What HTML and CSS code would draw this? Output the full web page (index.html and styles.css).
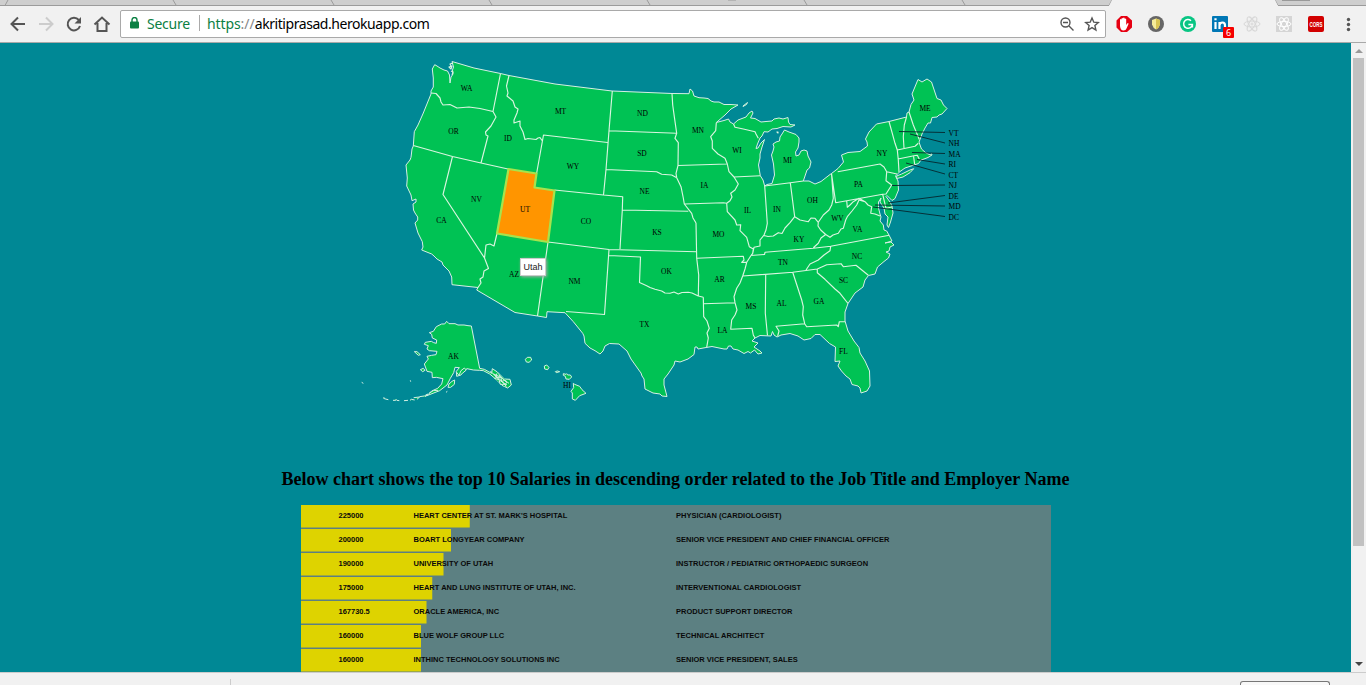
FILE: index.html
```html
<!DOCTYPE html>
<html lang="en">
<head>
<meta charset="utf-8">
<title>Salaries by state</title>
<link rel="stylesheet" href="styles.css">
</head>
<body>
<div class="browser">
  <svg class="tabs" width="1366" height="6" viewBox="0 0 1366 6">
    <rect class="tab-bg" width="1366" height="5"/>
    <path class="tab-line" d="M0 5.5H1109L1112 0M1275 0l3 5.500H1366M8 0L5 5.500M173 0l3 5M331 0l3 5M489 0l3 5M647 0l3 5M804 0l3 5M962 0l3 5"/>
    <path class="tab-active" d="M1109 6l3-6h163l3 6z"/>
    <path class="tab-button" d="M1282 0h28"/>
    <path class="tab-mark" d="M728 0h8"/>
  </svg>
  <div class="toolbar">
    <svg class="nav" width="120" height="36" viewBox="0 6 120 36">
      <path class="ic" d="M25 24H12M18 17.500L11.500 24L18 30.500"/>
      <path class="ic off" d="M39 24H52M46 17.500L52.500 24L46 30.500"/>
      <path class="ic" d="M78.800 20A6.300 6.300 0 1 0 80 26"/><path class="ic-fill" d="M81 17v6.500h-6.500z"/>
      <path class="ic" d="M94.500 24.500L102 17.500L109.500 24.500M97.500 23v8h9v-8"/>
    </svg>
    <div class="address">
      <svg class="lock" width="9" height="12" viewBox="0 0 9 12"><path d="M2 5V3a2.500 2.500 0 0 1 5 0v2" fill="none" stroke="#0b8043" stroke-width="1.400"/><rect y="4.500" width="9" height="7" rx="1" fill="#0b8043"/></svg>
      <span class="secure">Secure</span><span class="sep"></span>
      <span class="url"><span class="scheme">https</span><span class="slashes">://</span>akritiprasad.herokuapp.com</span>
      <svg class="addr-icons" width="46" height="20" viewBox="1056 14 46 20">
        <circle cx="1065.500" cy="22.500" r="4.500" class="thin"/><path class="thin" d="M1063 22.500h5M1069 26l4.500 4.500"/>
        <path class="thin" d="M1092 18l1.800 4.200 4.500.4-3.400 3 1 4.400-3.900-2.400-3.900 2.400 1-4.400-3.400-3 4.500-.4z"/>
      </svg>
    </div>
    <svg class="exts" width="260" height="36" viewBox="1106 6 260 36">
      <path fill="#e60012" d="M1121 16h6l5 4.500v7l-5 4.500h-6l-4.500-4.500v-7z"/>
      <path fill="#fff" d="M1120 26v-6.500q.8-1 1.500 0V23v-4.500q.8-1 1.600 0V23v-5q.8-1 1.600 0v5v-4q.8-1 1.500 0v6l1.500-2q1 0 .8 1l-2 4.500q-.5 2-3 2-3 0-3.500-4.500z"/>
      <circle cx="1156" cy="24" r="8" fill="#666"/><path fill="#f5ec9a" d="M1152 20l4-1.500 4 1.500v4.500q-1 3.500-4 5-3-1.500-4-5z"/><path fill="#d9c553" d="M1156 18.500l4 1.500v4.500q-1 3.500-4 5z"/>
      <circle cx="1188" cy="24" r="8" fill="#08c583"/><path d="M1191 20.700a4.400 4.400 0 1 0 1.400 3.800h-4M1192.400 24.500v3" fill="none" stroke="#fff" stroke-width="1.500"/>
      <rect x="1212" y="16" width="16" height="16" rx="1" fill="#0077b5"/>
      <path d="M1215.500 22v7M1215.500 18.200v2M1219.500 22v7M1219.500 25q.5-2.500 3-2.500 2.500 0 2.500 3v3.500" fill="none" stroke="#fff" stroke-width="2.200"/>
      <rect x="1223" y="27" width="11" height="11" rx="1" fill="#f50000"/><text x="1228.500" y="36" class="badge">6</text>
      <g class="atom"><ellipse cx="1252" cy="24" rx="8" ry="3"/><ellipse cx="1252" cy="24" rx="8" ry="3" transform="rotate(60 1252 24)"/><ellipse cx="1252" cy="24" rx="8" ry="3" transform="rotate(120 1252 24)"/><circle cx="1252" cy="24" r="1"/></g>
      <rect x="1276" y="16" width="16" height="16" fill="#d5d5d5"/>
      <g class="atom light"><ellipse cx="1284" cy="24" rx="7" ry="2.600"/><ellipse cx="1284" cy="24" rx="7" ry="2.600" transform="rotate(60 1284 24)"/><ellipse cx="1284" cy="24" rx="7" ry="2.600" transform="rotate(120 1284 24)"/></g>
      <rect x="1308" y="16" width="16" height="16" rx="2" fill="#d20000"/><text x="1316" y="26.500" class="cors" textLength="13" lengthAdjust="spacingAndGlyphs">CORS</text>
      <g fill="#555"><circle cx="1348.500" cy="19.500" r="1.700"/><circle cx="1348.500" cy="24.500" r="1.700"/><circle cx="1348.500" cy="29.500" r="1.700"/></g>
    </svg>
  </div>
</div>

<div class="viewport">
  <main class="page">
    <div class="map-wrap">
    <svg class="map" width="1351" height="400" viewBox="0 43 1351 400">
      <path class="state" d="M434.700 64.700L437 66 440 68 444 70 447.500 71 449.500 75 450 83 451 77 453 74 452.500 70 453.500 67 452 61.500 474 68 500.500 73.500 509 75.500 555 84 612 91 672 93.500 689 93.700 690 89 692.500 91 694 96 699 97.700 704 98 708 98.500 711 101 714 102 719 102 724 104.500 731 104.500 738 105 731 109 725 115 716.300 122.500 724 120.500 728.500 119 730 122 733.500 124 738 120 746 117 749 113 752 111 753 113 750.500 118 755 118.500 761 122 766 121.500 772 121 774 119 779 118 783 119 788 117.500 788.500 122 790 124.500 795 125 791 127 783 126.500 777 128.500 772 129 768 132 764 131.700 762 136 760 138 757.500 144 756 148.500 758 148 761 143 764.500 139.500 762 147 760 154 760 158 758.500 165 760.300 175.700 763 180 764.700 186 767 184.500 772 183.500 774.500 175 773.500 164 771.500 155 773 151 774 147 773 144 776 142 779.500 141 780 137 782 134 784.500 130 789 132 796 134.500 799 138 799 142 798 148 795.500 152 796 156 799 155 801 151 804 150 807 151 808 156 811 162 809.500 168 807 170 805 176 803.300 181 809 181 815 184 821 181.500 830 174.500 831.500 173.500 838 168.500 843.500 162 841.500 155 848 152.500 860 151.500 867.500 146 867 142 865.500 139 869 132 876.500 124 889 121.500 906.500 117 907 113 909 112 911 104.500 914 100 912 94 918 79.500 922 82 927 79 931.500 82 937 98.500 941 100 943.500 105 947 108.500 942 114 939 115 937 117 932 117.500 930.500 123 928 123 925 128 922 134 920 139.500 919 142 920 145 921.500 149 926 153 930.500 155 931.500 153.500 932 155 928 157.500 924 159 921 160 918.500 163.500 914 165 905 168 900 171.500 898 173.500 895.500 176 898 181 898.500 190 895 198.500 892 200.500 889.500 198 887 195.500 886 196.500 890 202 892 206 893 213 890.500 222 888.500 227.500 887 225 888 217 885 214 884 208 880 202 881 198 878.500 202 878.500 208 880 214 881 217 880 221 883.300 225 884 230 886.700 231 889.300 235.700 892 241 885 243 891 242 894 245 890 247 889 251 886 252 890 254 888.500 258 884 261.500 877.500 267 875 274 868.500 275.500 865 280 863 287 855 293 848 303.500 845 312 845 321 848 331 854 341 859 347.500 860 353 865 361 869.500 371 870 386 867 391 861 393 860 388 858 386 852 384.500 850 379 846 376 841.500 371 838 366 840 361 835 361.500 835.500 347 829.500 343.500 820 334.500 815 334.500 811 338.500 804 340 798 336 790 333.500 781 335 777 337 774 335 772.500 331.500 771 336 760 335.500 755 338 752 341 758 343 754 347 760 351 762 353 758 354 754.500 350 750.500 353 748 351.500 744 353.500 738 350 733 349 731 346 728.500 346 727 349 724 349 712 346.500 706 347.500 698 349 697 347 695 347 694 354.500 688 359 680 362 675 361 674 365 668 374 664 379 664 385 667 396.500 662 396 660 394 653 393 645 389 644 379 642 376 641 373 639.500 371 631 359 627 351 619 344 609.500 343.500 605 346 603 351 600 354 595 350.700 590 348 585 343.300 584 336 582.700 333.300 576 325 573.300 321.700 569 317 565 312.700 547 311.700 546.500 317.500 537.500 316 515 312.500 476.700 290 478 287.500 452 284.700 451.700 277 449 271 443 265 442 262 437 259 434 256 431.700 254 421.700 250 423 247 422.300 241.700 418 233 415 223 417.700 220 417.700 217 415 213 413.500 210 413 204 416 202 416 199 412 200.700 411 195 406.700 186 407.300 178 406 165 410 160 411 157.300 412 149 413.300 146 414.300 131.700 418 125 423.300 113 431 94 431 91 433.300 87 433.300 78 432.300 69z"/>
      <path class="state" d="M896.700 176L901.700 174 910 170 913.700 168.700 910 172.700 903 177 896.700 178.500zM743 106l4.500-3.500-1 2-3.500 2z"/>
      <path class="border" d="M431 93L436 93.500 440 98 441 102 443 105 450 104.500 457 108 469 107 480 108.500 493 111.500M500.500 73.500L493 111.500 496 117 491 126 485.500 132 486 135 488 136 481 163M413.300 145.500L452.500 156.500 481 163 508 169M509 75.500L506.500 86 508 93 507 96 513 101 515 107 518 109 517 113 514 120 514 123 520 121 520 126 523 132 525 139.500 528 138.500 536 139.500 538 138 540 137.500 542 140.500M536.500 174L543.500 135 607.500 142.500M612.300 91L609 130.700 606 169.500 603.500 195M554.500 190L603.500 195 622.700 196.700 622.300 210 620 249M452.500 156.500L443 194.500 484.500 258 488.500 268.500 484 271 483 277 480 279 481 283 478 287.500M484.500 258L486 245 490 244 494 246 497 233.500M548 242L537.500 316M548 242L609 249.500 696.700 251.700M609 249.500L604.500 314.500 566 311.500M609 255.500L640.500 257 639.500 282.500 646.700 285.700 650 287.500 655 289.300 661.700 291 665 293 670 293.300 674 292 678.300 294 682 292.500 688.300 292.300 692 293 698.300 296 703.300 297.300M696 223L696.700 258.300 698.700 275 698.300 296M703.300 297.300L703.700 316.700 707 321 709.300 328.300 707 333 708.300 338 706.700 347.300M703.700 303.700L735 302.700M696.700 258.300L743.300 256.300 744 260 741.700 262.300 746.700 262.300M622.300 210L688.300 211.300M609 130.700L676.700 133.300M606 169.500L656.700 171.700 661.700 174.300 671.700 175 676.700 177.700 681 186.700 683.300 198 684.300 204 691.700 213.300 693 218 696 223M672 93.500L672.700 105 674.300 116.700 676.700 133.300 675 138.300 678.300 142.700 678 165.500 676 173.300 676.700 177.700M678 165.500L726.700 164M716.300 122.700L715.700 130.700 710.700 136.700 712.300 141 712.300 148.300 718 154 725 158.300 727.300 164 729 171.700 734 177 760.300 175.700M734 177L738.300 184 735 190 730.700 193.300 732 197 730 200.700 726.700 203.300 723.300 202.700 684.300 204M726.700 203.300L727.300 211.700 735 220 736.700 225 740.700 224.700 740 230.700 746.700 237.300 749.300 246.700 753.300 249 752.700 253.300 750.700 256 746.700 262.300 745 269 742.700 276 740 283 736.700 288.300 734 296.700 735 302.700 737 310 735 315 731.700 320 730.700 329.300 752 328.300 753.300 335 755 338M764.700 186L767.300 223.300 766 230 764 235 760 240 760 246 754 247.300 752.700 253.300M764 235.500L768 236.500 773.300 236 778.300 232.700 782 233.500 785 228 790 222.700 794.700 216.700 800 220 808.300 221.700 811 218 815 218.300 818.300 222.300 823.300 215 829 210 831.700 205 833.300 198.300 831.500 173.500M790.300 182.700L794.700 216.700M764.700 186L790.300 182.700 803.300 181M818.300 222.300L818 226 820.700 230 825.700 234.500 821 238 818.300 243.300 813.300 247.700M825.700 234.500L830 237.300 833 235 838.300 233.300 841 229 843.300 228.300 845.700 220 847.300 216.700 852 211 856.700 205 859 200 865 201.700 868 205 871.700 206.700 870.700 213.300 875 214 880 216M831.500 173.500L835.700 202.700 882.700 194.300 886 208.300 892 207M846.700 201L847.300 207.300 850 205 853.300 201.700 859 198.300 865 201.700M882.700 194.300L886 194 891.700 185 886 180.700 886.700 171.700 884 167 880 164 837.700 171.700M886.700 171.700L897 174M889 121.500L892.300 133.300 895 143.300 897.300 150 898.300 160 899 172M906.500 117L904.300 125 903.300 136.700 904 148M897.300 150L915 146.300 918.300 143.300M909 112L913.300 125 919.300 139.500M898 159L914 155.700 917.300 155.300 919.300 159.300M913.500 156L914.700 164.300M750.700 255.500L764.500 254.500 765 252.300 813.300 248.300 830.700 246.300 889.300 235.300M830.700 246.300L830 250.700 824 255 818.300 260 810 264 806 270M742.700 276L792.700 272.300 817.300 269 826.700 264.700 841 263.700 843.300 266.700 856 265.300 868.300 275.300M817.300 269L817.300 272.700 825 279.300 835 289 840 293.300 848 303.500M765.700 275L765.300 313.300 767.500 335.500M792.700 272.300L801.700 300 803.300 306.700 802.700 315 804.700 323.700 806.700 326.700 836.700 325 838.300 326.700 839.300 321.700 845 321.700M804.700 323.700L776 326.300 779 331 777.700 336M733.500 124L735 127.300 743.300 129 755 131.700 756 134 758.300 138.300"/>
      <path class="state utah" d="M508.500 169L536.500 173.500 534.500 187.500 554.500 190.500 548 242 497 233.500z"/>
      <path class="border" d="M449 67l3-1-1 3zM453 63l-3 1 1 2M777 132h1v1zM451 71l2 1-1 3"/>
      <g transform="translate(355 310) scale(.33333)">
        <path class="state far" d="M349 48L374 175 388 178 410 190 412 176 427 186 448 207 465 208 469 225 458 234 441 226 422 207 404 192 385 182 374 181 355 180 336 176 326 184 318 195 305 199 304 184 313 173 300 172 296 188 286 205 276 225 254 242 231 251 216 257 230 243 248 235 260 222 264 206 244 202 232 203 231 187 216 184 208 162 220 147 216 139 230 136 243 134 246 124 223 122 216 117 220 107 208 103 211 97 229 94 236 98 244 100 245 90 232 84 230 73 223 68 235 64 244 50 260 42 269 42 275 34 282 41 300 41 309 45 327 45 339 47z"/>
        <path class="state far" d="M178 125l8 0 10 9-6 2zM196 179l9-4 5 6-7 4zM282 222l9-8 8-4-1 13-11 9-8 0zM273 247l4-3M20 217l5 3M166 211l1 4M84 264h5l1 4M91 267l9 2M114 271h8l2-4M125 271l8 1M147 272l12-1M165 271l4-3 10 2M176 263l18-2-8 7M194 260l14-2 10-6-7 9M222 250l13-8 14-1M416 192l22 19 12 14 5-8-17-15zM431 194l21 19 10 7M406 183l28 28 22 14M304 186l8 10 6-14 10-8 6 6-12 10M418 205l14 4 4 14 14 0 4 10M426 190l-4 12 16 0 2 12 14-4"/>
        <path class="state far" d="M511 148l6-6h10l3 8-8 7-8-1zM568 168l7-3 7 7-4 7-9-2zM601 185l6-2 7 2-10 3zM625 191l8 2 2-2 3 4 8 0 4 6-7 7-10-1-2-8-6-3zM655 220l4 3 15 6 7 10 12 11-19 7-13 14-9-4 0-18-4-5 8-11z"/>
      </g>
      <path class="leader" d="M899 131.500L945 132.500M910 134L945 143M912 152.500L945 153.500M917 159.500L945 164M906 163L945 174M892 185.500L945 185M888 203L945 195.500M875 205L945 206M873 207L945 216.500"/>
      <g class="labels"><text x="466.500" y="91">WA</text><text x="453.500" y="134">OR</text><text x="508" y="141">ID</text><text x="560.500" y="114">MT</text><text x="573" y="169">WY</text><text x="642.500" y="116">ND</text><text x="642" y="156">SD</text><text x="644.500" y="194">NE</text><text x="657" y="235">KS</text><text x="698" y="133">MN</text><text x="737" y="153">WI</text><text x="787.500" y="163">MI</text><text x="704.500" y="188">IA</text><text x="747.500" y="213">IL</text><text x="777" y="212">IN</text><text x="812.500" y="203">OH</text><text x="476.500" y="202">NV</text><text x="525" y="212">UT</text><text x="441.500" y="223">CA</text><text x="586" y="224">CO</text><text x="514" y="277">AZ</text><text x="574.500" y="284">NM</text><text x="666.500" y="274">OK</text><text x="644.500" y="327">TX</text><text x="718.500" y="237">MO</text><text x="719.500" y="282">AR</text><text x="722.500" y="333">LA</text><text x="751" y="309">MS</text><text x="781.500" y="306">AL</text><text x="819" y="304">GA</text><text x="783" y="265">TN</text><text x="799" y="242">KY</text><text x="837.500" y="221">WV</text><text x="857.500" y="232">VA</text><text x="857" y="259">NC</text><text x="843.500" y="283">SC</text><text x="843.500" y="354">FL</text><text x="858.500" y="187">PA</text><text x="882" y="156">NY</text><text x="925" y="111">ME</text><text x="453.500" y="359">AK</text><text x="567" y="388">HI</text></g>
      <g class="labels side"><text x="948.500" y="136">VT</text><text x="948.500" y="146">NH</text><text x="948.500" y="157">MA</text><text x="948.500" y="167">RI</text><text x="948.500" y="178">CT</text><text x="948.500" y="188">NJ</text><text x="948.500" y="199">DE</text><text x="948.500" y="209">MD</text><text x="948.500" y="220">DC</text></g>
    </svg>
    <div class="tooltip">Utah</div>
    </div>
    <h3 class="title">Below chart shows the top 10 Salaries in descending order related to the Job Title and Employer Name</h3>
    <svg class="chart" width="750" height="240">
      <g><rect width="168.750" height="22.500"/><text x="37.500" y="13">225000</text><text x="112.500" y="13">HEART CENTER AT ST. MARK'S HOSPITAL</text><text x="375" y="13">PHYSICIAN (CARDIOLOGIST)</text></g>
      <g transform="translate(0 24)"><rect width="150" height="22.500"/><text x="37.500" y="13">200000</text><text x="112.500" y="13">BOART LONGYEAR COMPANY</text><text x="375" y="13">SENIOR VICE PRESIDENT AND CHIEF FINANCIAL OFFICER</text></g>
      <g transform="translate(0 48)"><rect width="142.500" height="22.500"/><text x="37.500" y="13">190000</text><text x="112.500" y="13">UNIVERSITY OF UTAH</text><text x="375" y="13">INSTRUCTOR / PEDIATRIC ORTHOPAEDIC SURGEON</text></g>
      <g transform="translate(0 72)"><rect width="131.250" height="22.500"/><text x="37.500" y="13">175000</text><text x="112.500" y="13">HEART AND LUNG INSTITUTE OF UTAH, INC.</text><text x="375" y="13">INTERVENTIONAL CARDIOLOGIST</text></g>
      <g transform="translate(0 96)"><rect width="125.500" height="22.500"/><text x="37.500" y="13">167730.5</text><text x="112.500" y="13">ORACLE AMERICA, INC</text><text x="375" y="13">PRODUCT SUPPORT DIRECTOR</text></g>
      <g transform="translate(0 120)"><rect width="120" height="22.500"/><text x="37.500" y="13">160000</text><text x="112.500" y="13">BLUE WOLF GROUP LLC</text><text x="375" y="13">TECHNICAL ARCHITECT</text></g>
      <g transform="translate(0 144)"><rect width="120" height="22.500"/><text x="37.500" y="13">160000</text><text x="112.500" y="13">INTHINC TECHNOLOGY SOLUTIONS INC</text><text x="375" y="13">SENIOR VICE PRESIDENT, SALES</text></g>
    </svg>
  </main>
  <div class="scrollbar"><span class="arrow up"></span><span class="thumb"></span><span class="arrow down"></span></div>
</div>
<div class="downloads"><span class="divider"></span><span class="show-all"></span></div>
</body>
</html>
```
FILE: styles.css
```css
* { box-sizing: border-box; }
body { margin: 0; width: 1366px; height: 685px; overflow: hidden; display: flex; flex-direction: column; background: #f1f1f1; }
svg { display: block; }
.browser { height: 43px; flex: none; border-bottom: 1px solid #a9a9a9; background: #f1f1f1; }
.tab-bg { fill: #cecece; }
.tab-line { fill: none; stroke: #9b9b9b; }
.tab-active { fill: #f1f1f1; stroke: none; }
.tab-button { stroke: #999; stroke-width: 2; }
.tab-mark { stroke: #999; }
.toolbar { height: 36px; display: flex; align-items: center; }
.nav, .exts { flex: none; }
.ic { fill: none; stroke: #555; stroke-width: 2; }
.ic.off { stroke: #ccc; }
.ic-fill { fill: #555; }
.address { width: 986px; height: 28px; flex: none; display: flex; align-items: center; padding: 0 3px 2px 9px; background: #fff; border: 1px solid #a9a9a9; border-radius: 2px; font: 14px "Noto Sans", sans-serif; }
.addr-icons { position: relative; top: 1px; }
.secure { margin-left: 8px; width: 43px; color: #0b8043; white-space: nowrap; letter-spacing: -.25px; }
.sep { width: 1px; height: 16px; background: #aaa; margin: 0 7px 0 9px; }
.url { flex: 1; color: #000; letter-spacing: -.44px; white-space: nowrap; }
.scheme { color: #0b8043; letter-spacing: -.1px; }
.slashes { color: #888; letter-spacing: 0; }
.thin { fill: none; stroke: #555; stroke-width: 1.4; }
.badge { font: 9px "Noto Sans", sans-serif; fill: #fff; text-anchor: middle; }
.cors { font: bold 7.5px "Liberation Sans", sans-serif; fill: #fff; text-anchor: middle; }
.atom { fill: none; stroke: #d8d8d8; }
.atom.light { stroke: #fff; }
.viewport { height: 629px; flex: none; display: flex; overflow: hidden; }
.page { width: 1351px; height: 629px; overflow: hidden; background: #008895; }
.map-wrap { position: relative; }
.state { fill: #00c254; stroke: #d5efe4; stroke-width: 1; stroke-linejoin: round; }
.state.far { stroke-width: 3; }
.border { fill: none; stroke: #d9f5df; stroke-width: 1.15; stroke-linejoin: round; }
.state.utah { fill: #ff9500; stroke: #a6e34d; stroke-width: 2.2; }
.leader { fill: none; stroke: #06262c; stroke-width: .9; }
.labels { font: 7.5px "Liberation Serif", serif; text-anchor: middle; fill: #000; }
.labels.side { text-anchor: start; }
.tooltip { position: absolute; left: 520px; top: 215px; width: 26px; height: 18px; background: #fff; border: 1px solid #ccc; box-shadow: 1px 1px 3px #aaa; font: 9px/17px "Liberation Sans", sans-serif; text-align: center; color: #222; }
.title { margin: 25px 0 15px; font: bold 18.05px/22px "Liberation Serif", serif; text-align: center; white-space: nowrap; }
.chart { margin: 0 auto 0 301px; background: #5c8082; }
.chart rect { fill: #ded300; }
.chart text { font: bold 7.5px "Liberation Sans", sans-serif; fill: #0a0a0a; }
.scrollbar { width: 15px; display: flex; flex-direction: column; align-items: center; background: #f1f1f1; }
.thumb { width: 11px; height: 488px; background: #c1c1c1; margin: 5px 0 auto; }
.arrow { border: 4px solid transparent; }
.up { border-top: 0; border-bottom-color: #999; margin-top: 6px; }
.down { border-bottom: 0; border-top-color: #444; margin-bottom: 6px; }
.downloads { height: 13px; flex: none; border-top: 1px solid #ccc; display: flex; align-items: flex-end; overflow: hidden; }
.divider { width: 1px; height: 6px; margin-left: 230px; background: #ccc; }
.show-all { width: 90px; height: 4px; margin-left: 1009px; border: 1px solid #777; border-bottom: 0; border-radius: 3px 3px 0 0; background: #f8f8f8; }
```
